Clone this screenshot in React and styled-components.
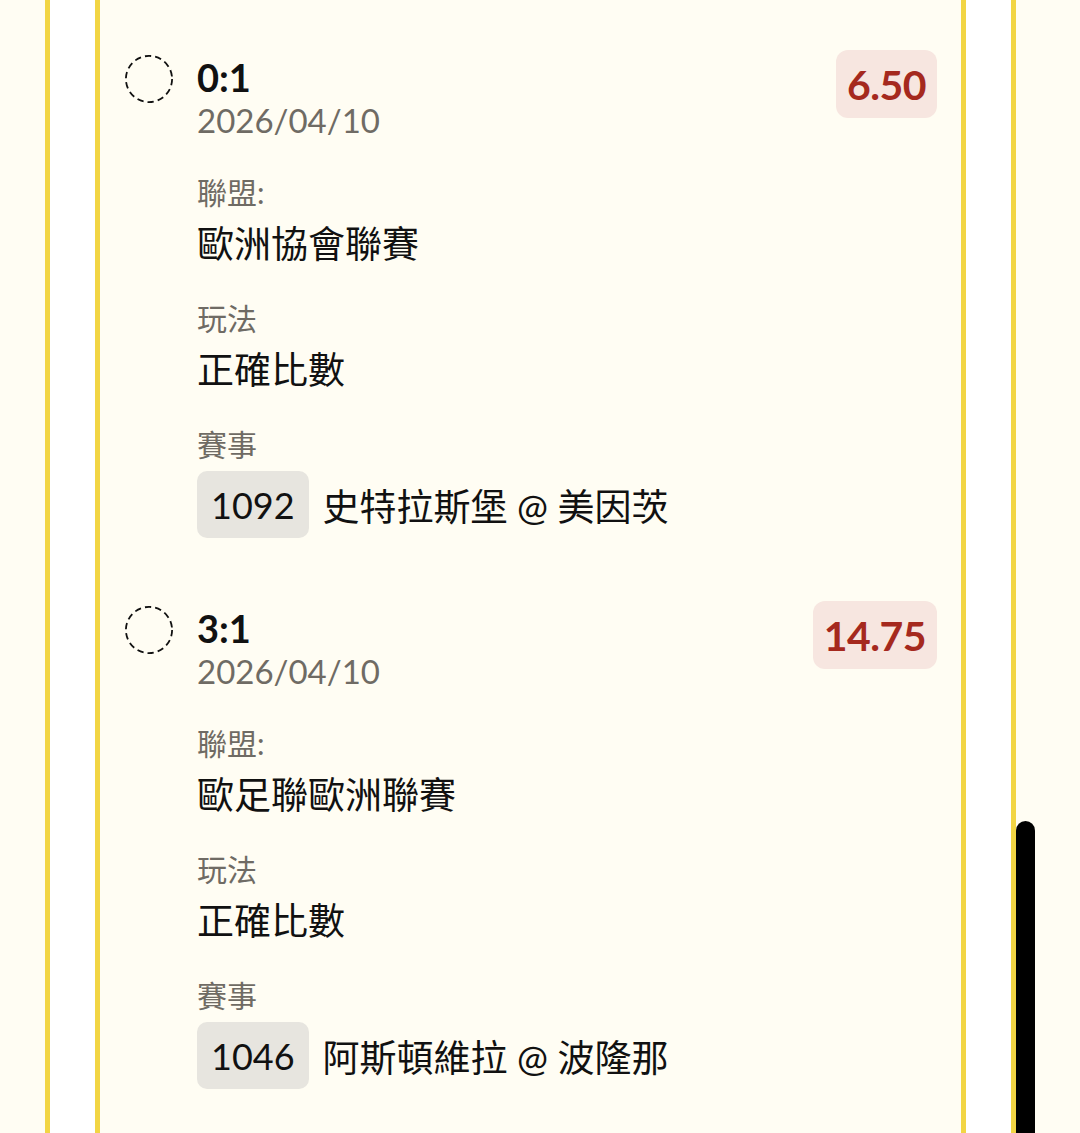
import React from "react";
import styled, { createGlobalStyle } from "styled-components";

const GlobalStyle = createGlobalStyle`
  html, body {
    margin: 0;
    padding: 0;
    height: 100%;
    overflow: hidden;
    background: #fffdf3;
  }
  body {
    font-family: "Lato", "Noto Sans CJK TC", sans-serif;
  }
`;

const Page = styled.div`
  height: 1133px;
  padding-left: 45px;
  background: #fffdf3;
`;

const OuterFrame = styled.div`
  width: 971px;
  height: 100%;
  box-sizing: border-box;
  border-left: 5px solid #f2d544;
  border-right: 5px solid #f2d544;
  background: #ffffff;
  padding: 0 45px;
`;

const InnerFrame = styled.div`
  height: 100%;
  box-sizing: border-box;
  border-left: 5px solid #f2d544;
  border-right: 5px solid #f2d544;
  background: #fffdf3;
  padding: 55px 24px 0 25px;
`;

const Item = styled.div`
  display: flex;
  align-items: flex-start;
  margin-bottom: 68px;
`;

const Radio = styled.svg`
  flex: none;
  width: 48px;
  height: 48px;
  margin-right: 24px;
`;

const Body = styled.div`
  flex: 1;
  min-width: 0;
`;

const Title = styled.div`
  font-size: 38px;
  font-weight: 700;
  line-height: 1.2;
  color: #111111;
`;

const DateText = styled.div`
  font-size: 33px;
  line-height: 1.2;
  color: #6f6b64;
`;

const Field = styled.div`
  margin-top: 34px;
`;

const Label = styled.div`
  font-size: 30px;
  line-height: 36px;
  color: #6f6b64;
  margin-bottom: 12px;
`;

const Value = styled.div`
  font-size: 37px;
  line-height: 44px;
  color: #111111;
`;

const MatchRow = styled.div`
  display: flex;
  align-items: center;
  gap: 14px;
  margin-top: -3px;
`;

const MatchNo = styled.span`
  display: inline-flex;
  align-items: center;
  height: 67px;
  padding: 0 14px;
  border-radius: 10px;
  background: #e7e5df;
  font-size: 36px;
  color: #111111;
`;

const MatchName = styled.span`
  font-size: 37px;
  color: #111111;
`;

const Odds = styled.div`
  flex: none;
  display: flex;
  align-items: center;
  height: 68px;
  margin-top: -5px;
  padding: 0 11px;
  border-radius: 12px;
  background: #f7e6e0;
  color: #a5291e;
  font-size: 41px;
  font-weight: 700;
  letter-spacing: -0.5px;
`;

const ScrollThumb = styled.div`
  position: fixed;
  left: 1016px;
  top: 821px;
  width: 19px;
  height: 400px;
  border-radius: 10px;
  background: #000000;
`;

const bets = [
  {
    score: "0:1",
    date: "2026/04/10",
    league: "歐洲協會聯賽",
    play: "正確比數",
    no: "1092",
    match: "史特拉斯堡 @ 美因茨",
    odds: "6.50",
  },
  {
    score: "3:1",
    date: "2026/04/10",
    league: "歐足聯歐洲聯賽",
    play: "正確比數",
    no: "1046",
    match: "阿斯頓維拉 @ 波隆那",
    odds: "14.75",
  },
];

function DashedCircle() {
  return (
    <Radio viewBox="0 0 48 48">
      <circle
        cx="24"
        cy="24"
        r="23.1"
        fill="none"
        stroke="#111"
        strokeWidth="1.8"
        strokeDasharray="6.4 4"
      />
    </Radio>
  );
}

function BetItem({ bet }) {
  return (
    <Item>
      <DashedCircle />
      <Body>
        <Title>{bet.score}</Title>
        <DateText>{bet.date}</DateText>
        <Field>
          <Label>聯盟:</Label>
          <Value>{bet.league}</Value>
        </Field>
        <Field>
          <Label>玩法</Label>
          <Value>{bet.play}</Value>
        </Field>
        <Field>
          <Label>賽事</Label>
          <MatchRow>
            <MatchNo>{bet.no}</MatchNo>
            <MatchName>{bet.match}</MatchName>
          </MatchRow>
        </Field>
      </Body>
      <Odds>{bet.odds}</Odds>
    </Item>
  );
}

export default function App() {
  return (
    <Page>
      <GlobalStyle />
      <OuterFrame>
        <InnerFrame>
          {bets.map((b) => (
            <BetItem key={b.no} bet={b} />
          ))}
        </InnerFrame>
      </OuterFrame>
      <ScrollThumb />
    </Page>
  );
}
